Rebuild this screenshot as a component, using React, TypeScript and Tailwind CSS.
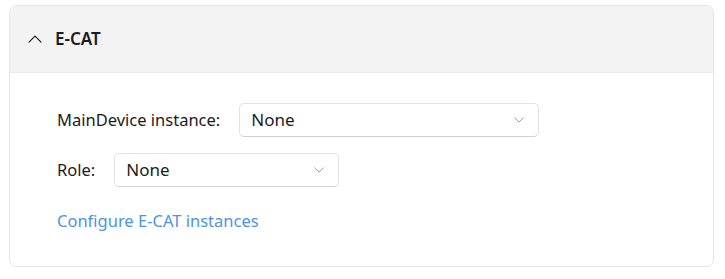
import { useState } from "react";

function Chevron({ up = false, className = "" }: { up?: boolean; className?: string }) {
  return (
    <svg width="14" height="8" viewBox="0 0 14 8" className={className} fill="none">
      <path
        d={up ? "M1 7.2L7 1.2L13 7.2" : "M1 1L7 7L13 1"}
        stroke="currentColor"
        strokeWidth="1.2"
        strokeLinecap="round"
        strokeLinejoin="round"
      />
    </svg>
  );
}

function Select({ value, width }: { value: string; width: string }) {
  return (
    <div
      className={`${width} h-[34px] flex items-center justify-between pl-[11px] pr-[14px] bg-white border border-[#e3e3e3] border-b-[#d0d0d0] rounded-[5px]`}
    >
      <span className="text-[17px] text-[#1b1b1b]">{value}</span>
      <Chevron className="text-[#8a8a8a] w-[10px] h-[6px]" />
    </div>
  );
}

export default function App() {
  const [open] = useState(true);

  return (
    <div className="w-[725px] h-[279px] bg-white pt-[5px] pl-[9px] pr-[11px] font-['Segoe_UI','Noto_Sans','Open_Sans',sans-serif]">
      <div className="h-[262px] rounded-[7px] border border-[#e6e6e6] overflow-hidden flex flex-col">
        <div className="h-[67px] bg-[#f3f3f3] flex items-center pl-[18px] gap-[13px] border-b border-[#ebebeb]">
          <Chevron up={open} className="text-[#1b1b1b]" />
          <span className="text-[17px] font-semibold text-[#1b1b1b]">E-CAT</span>
        </div>
        <div className="flex flex-col pl-[47px] pt-[30px] gap-[16px]">
          <div className="flex items-center gap-[19px]">
            <span className="text-[16.5px] text-[#1b1b1b]">MainDevice instance:</span>
            <Select value="None" width="w-[300px]" />
          </div>
          <div className="flex items-center gap-[19px]">
            <span className="text-[16.5px] text-[#1b1b1b]">Role:</span>
            <Select value="None" width="w-[225px]" />
          </div>
          <a href="#" className="mt-[6px] text-[16.5px] text-[#4d94de]">
            Configure E-CAT instances
          </a>
        </div>
      </div>
    </div>
  );
}
